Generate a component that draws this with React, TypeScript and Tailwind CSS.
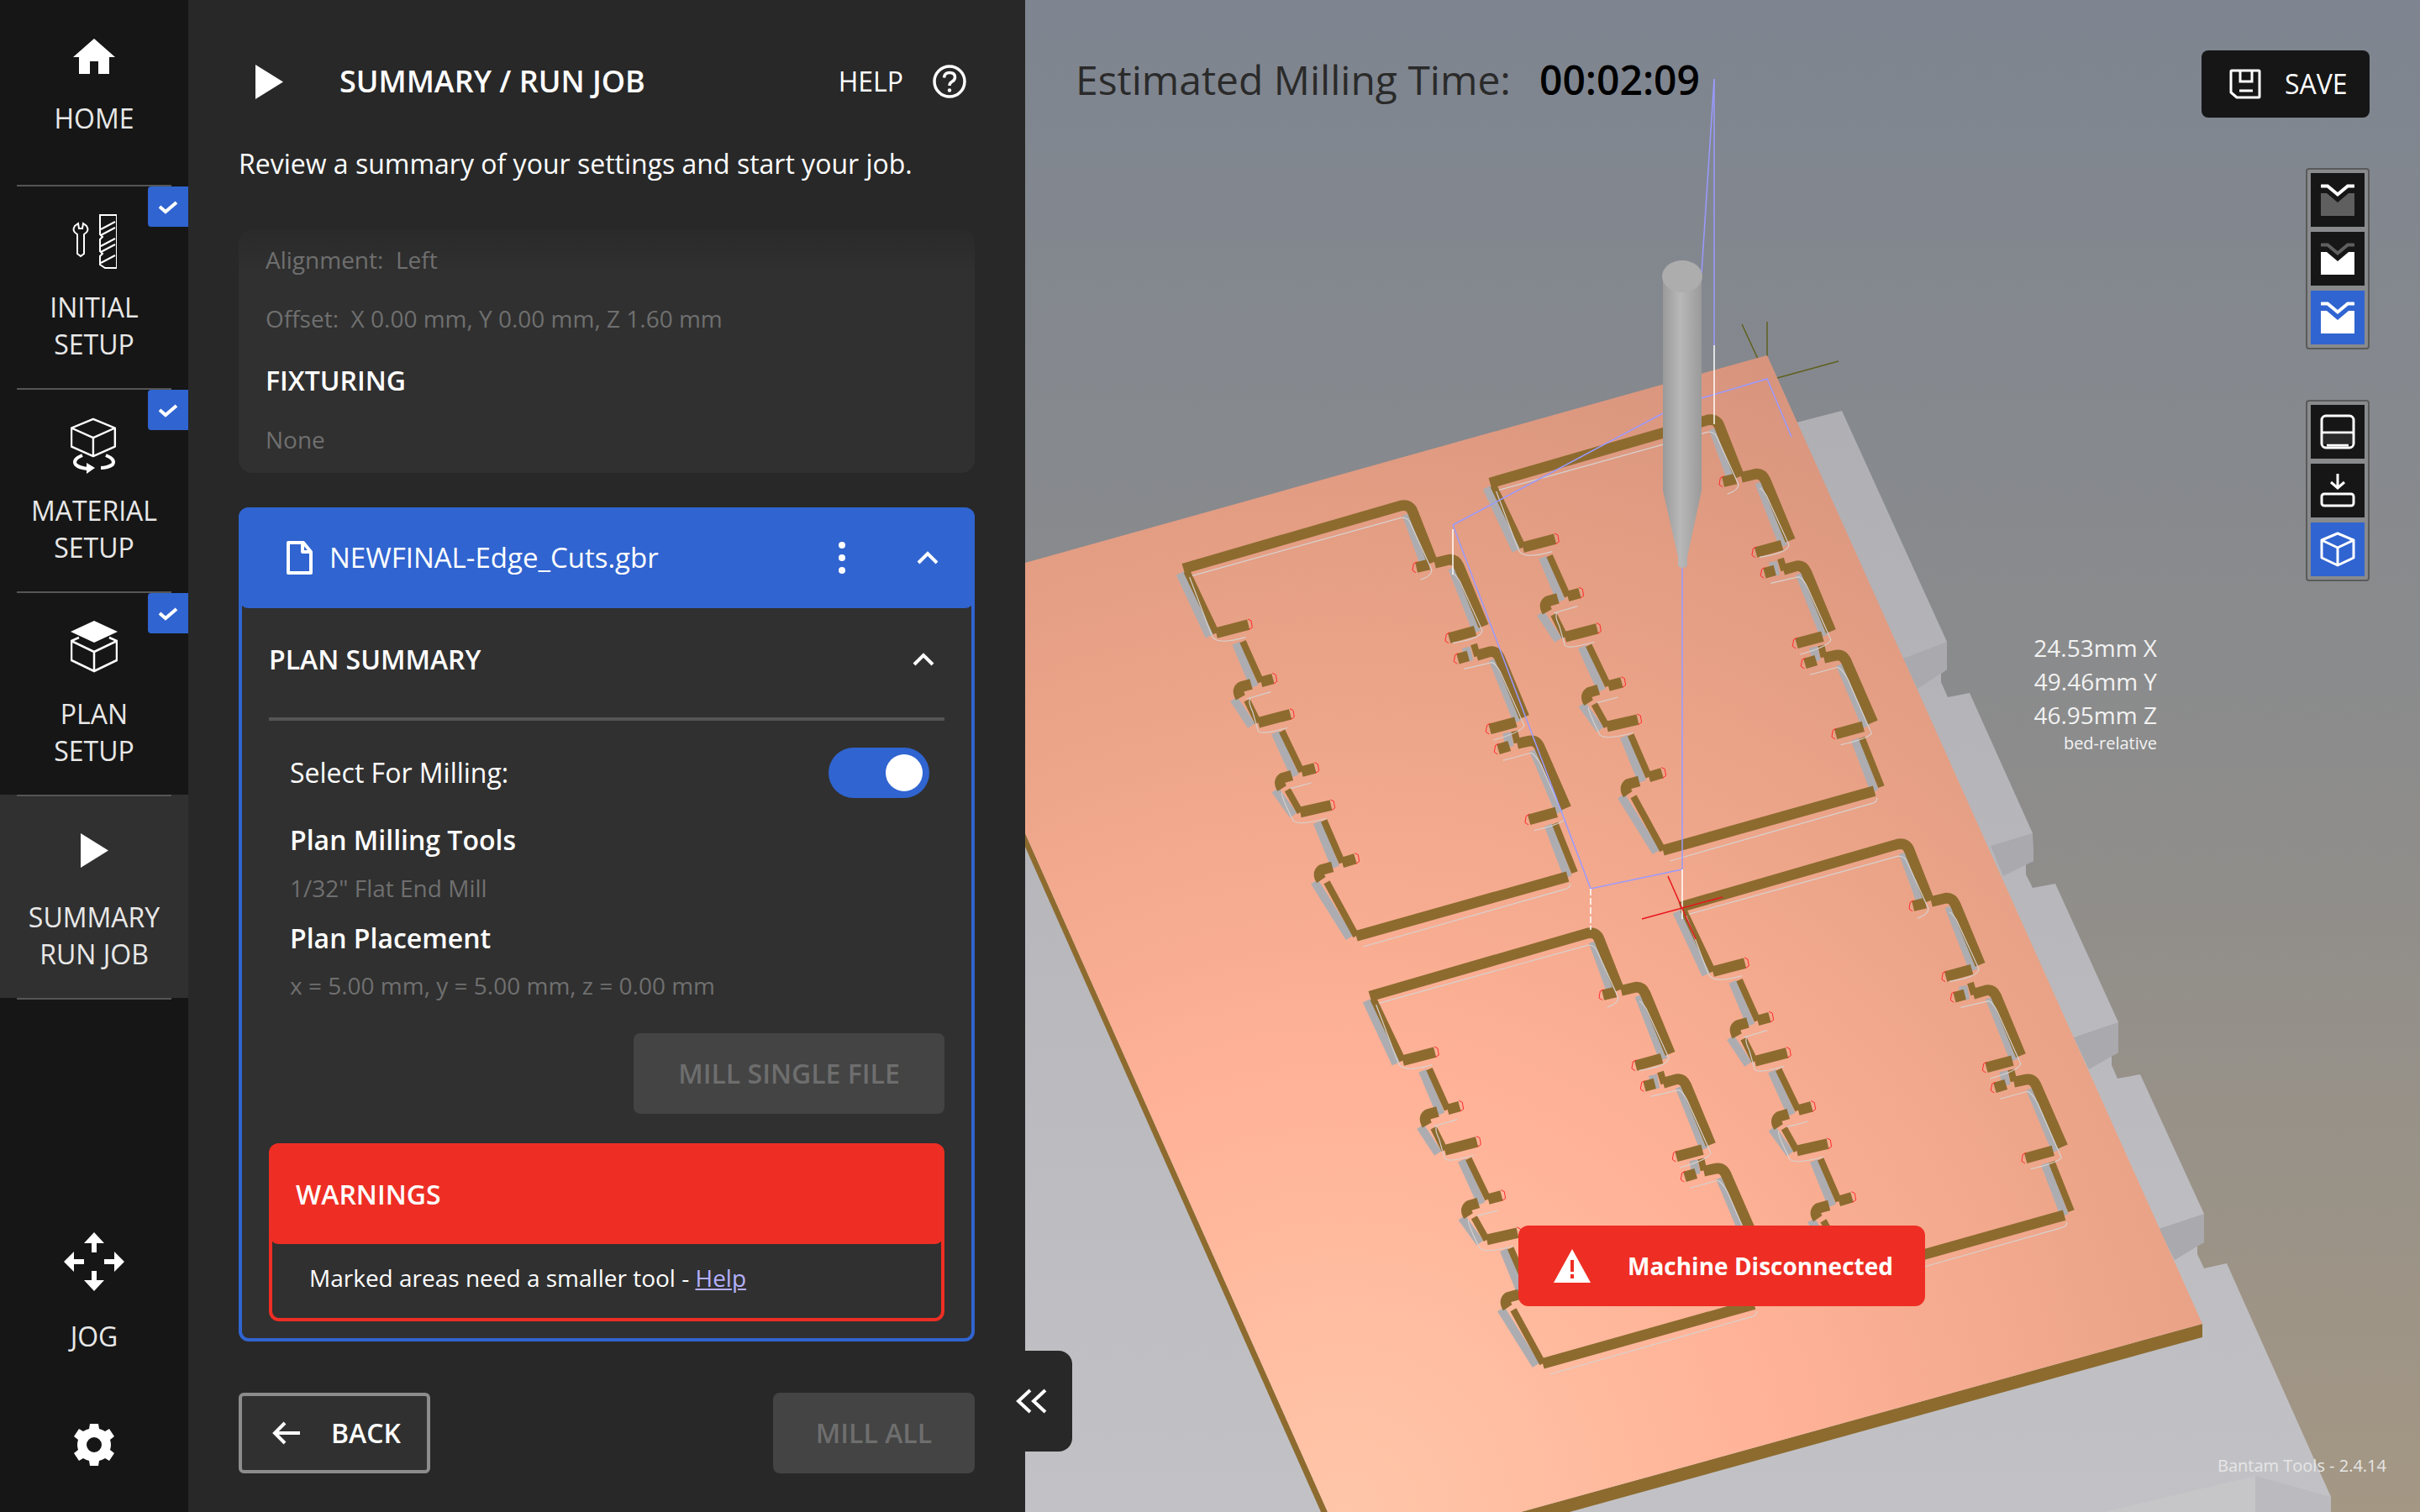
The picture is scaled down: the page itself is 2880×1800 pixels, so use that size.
import type { ReactNode } from 'react';

// walls and cuts of one PCB panel, in units of 1/3 px
const THICK = [
  'M58 300 L835 75 Q868 68 878 100 L948 278',
  'M890 296 L935 285',
  'M955 280 L1005 268 Q1030 265 1042 292 L1130 505',
  'M1007 548 L1100 522',
  'M1038 622 L1075 612',
  'M1105 610 L1150 597 Q1175 592 1187 618 L1275 830',
  'M1152 873 L1245 848',
  'M1182 945 L1222 933',
  'M1250 925 L1295 915 Q1320 912 1332 942 L1425 1155',
  'M1292 1197 L1390 1170',
  'M1430 1400 L675 1612',
  'M175 530 L290 500',
  'M335 705 L378 693',
  'M300 712 L265 722 Q248 735 262 760',
  'M325 850 L440 820',
  'M480 1025 L528 1012',
  'M445 1038 L412 1048 Q395 1062 410 1085',
  'M475 1170 L585 1145',
  'M625 1350 L672 1336',
  'M590 1365 L552 1375 Q535 1390 550 1412',
];

const THIN = [
  'M1095 570 L1108 612',
  'M1240 880 L1250 922',
  'M1385 1210 L1455 1385',
  'M70 310 L175 530',
  'M270 560 L335 705',
  'M285 770 L325 850',
  'M410 880 L480 1025',
  'M430 1090 L475 1170',
  'M560 1200 L625 1350',
  'M570 1420 L675 1612',
];

const WALLS = [
  'M878 100 L945 285',
  'M1042 292 L1130 520',
  'M1092 575 L1102 625',
  'M1187 618 L1275 840',
  'M1237 880 L1247 930',
  'M1332 942 L1425 1165',
  'M1385 1210 L1455 1395',
  'M70 310 L175 535',
  'M270 560 L335 715',
  'M262 760 L325 855',
  'M410 880 L480 1035',
  'M410 1085 L475 1175',
  'M560 1200 L625 1360',
  'M550 1412 L675 1612',
];

const TOOLPATH =
  'M90 325 L835 118 Q860 115 870 140 L945 305 Q945 325 905 340 M1020 318 Q1030 320 1045 345 L1125 520 Q1125 550 1020 565 M1060 658 L1160 635 Q1175 640 1190 670 L1275 860 Q1265 885 1165 912 M1200 985 L1300 958 Q1315 965 1335 1000 L1420 1195 Q1400 1215 1310 1235 M1440 1425 Q1440 1440 1420 1445 L700 1650 M80 330 L160 540 Q175 575 280 545 M285 765 L370 740 M300 760 Q285 770 305 810 L325 880 Q340 895 430 868 M440 1085 L515 1065 M410 1100 Q405 1110 450 1200 Q470 1220 570 1192';

const RED_ENDS = [
  [296, 500, 1], [384, 693, 1], [446, 820, 1], [534, 1012, 1], [591, 1145, 1], [678, 1336, 1],
  [884, 296, -1], [1001, 548, -1], [1032, 622, -1], [1146, 873, -1], [1176, 945, -1], [1286, 1197, -1],
];

function Panel({ dx, dy }: { dx: number; dy: number }) {
  return (
    <g transform={`translate(${1980 + dx} ${980 + dy}) scale(0.3333)`} fill="none">
      {WALLS.map((d) => (
        <path key={d} d={d} transform="translate(-24 6)" stroke="#adadb1" strokeWidth="30" />
      ))}
      {THICK.map((d) => (
        <path key={d} d={d} stroke="#8d6b2f" strokeWidth="38" strokeLinejoin="round" />
      ))}
      {THIN.map((d) => (
        <path key={d} d={d} stroke="#8d6b2f" strokeWidth="24" />
      ))}
      {RED_ENDS.map(([x, y, s]) => (
        <path
          key={`${x}-${y}`}
          d={`M${x - 8 * s} ${y - 20} L${x + 4 * s} ${y - 14} L${x + 8 * s} ${y + 10} L${x - 4 * s} ${y + 18}`}
          stroke="#ff2a2a"
          strokeWidth="3"
        />
      ))}
      <path d={TOOLPATH} stroke="#d6d2d0" strokeWidth="3.5" />
    </g>
  );
}

function Scene() {
  return (
    <svg className="absolute inset-0 h-full w-full" viewBox="1220 0 1660 1800">
      <defs>
        <radialGradient id="copper" gradientUnits="userSpaceOnUse" cx="1600" cy="1800" r="1500">
          <stop offset="0" stopColor="#ffc6a9" />
          <stop offset="0.35" stopColor="#ffb297" />
          <stop offset="0.66" stopColor="#eba488" />
          <stop offset="1" stopColor="#d6937c" />
        </radialGradient>
        <linearGradient id="bed" gradientUnits="userSpaceOnUse" x1="0" y1="500" x2="0" y2="1800">
          <stop offset="0" stopColor="#afafb4" />
          <stop offset="1" stopColor="#c2c2c6" />
        </linearGradient>
        <linearGradient id="shank" x1="0" y1="0" x2="1" y2="0">
          <stop offset="0" stopColor="#9a9a9a" />
          <stop offset="0.45" stopColor="#b8b8b8" />
          <stop offset="1" stopColor="#9a9a9a" />
        </linearGradient>
      </defs>

      {/* bed with its teeth */}
      <polygon
        fill="url(#bed)"
        points="2138,503 2192,489 2317,764 2317,797 2310,802 2310,812 2318,830 2344,825 2419,992 2420,1025 2411,1029 2411,1041 2419,1057 2446,1052 2521,1217 2521,1253 2513,1257 2513,1268 2520,1284 2547,1279 2623,1445 2623,1479 2615,1482 2615,1493 2623,1510 2650,1504 2774,1782 2774,1800 1220,1800 1220,900"
      />
      <polygon fill="#a9a9ae" points="2265,784 2317,764 2317,797 2282,820" />
      <polygon fill="#a9a9ae" points="2369,1007 2419,992 2420,1025 2384,1043" />
      <polygon fill="#a9a9ae" points="2468,1235 2521,1217 2521,1253 2486,1273" />
      <polygon fill="#a9a9ae" points="2569,1463 2623,1445 2623,1479 2588,1500" />
      <polygon fill="#bbbbbf" points="2684,1757 2774,1782 2774,1800 2684,1800" />
      <polygon fill="#c6c6c9" points="2504,1800 2684,1757 2684,1800" />

      {/* axes at the work origin */}
      <g fill="none" stroke="#5f5f1c" strokeWidth="1.5">
        <path d="M2103 383 L2103 451" />
        <path d="M2073 386 L2103 451" />
        <path d="M2115 450 L2188 430" />
      </g>

      {/* copper board */}
      <polygon fill="#8d6b2f" points="2621,1576 2621,1592 1868,1800 1810,1800" />
      <polygon fill="#8d6b2f" points="1220,992 1580,1800 1572,1800 1220,1008" />
      <polygon fill="url(#copper)" points="2103,423 2621,1576 1810,1800 1580,1800 1220,992 1220,670" />

      <Panel dx={-226} dy={-505} />
      <Panel dx={-591} dy={-403} />
      <Panel dx={0} dy={0} />
      <Panel dx={-369} dy={106} />

      {/* tool paths */}
      <g fill="none" stroke="#9a9aff" strokeWidth="1.5">
        <path d="M2040 94 L2025 325" />
        <path d="M2040 94 L2040 411" />
        <path d="M1729 625 L1979 492" />
        <path d="M2025 474 L2103 451 L2132 520" />
        <path d="M1729 625 L1893 1058 L2002 1035" />
        <path d="M2002 676 L2002 1035" />
      </g>
      <g fill="none" stroke="#ffffff" strokeWidth="1.5">
        <path d="M2040 411 L2040 505" />
        <path d="M1729 630 L1729 684" />
        <path d="M1893 1058 L1893 1107" strokeDasharray="8 3" />
        <path d="M2002 1035 L2002 1094" />
      </g>
      <g fill="none" stroke="#e8141c" strokeWidth="1.5">
        <path d="M1985 1043 L2018 1118" />
        <path d="M1954 1094 L2050 1068" />
      </g>

      {/* end mill */}
      <path d="M1979 329 L2025 329 L2025 584 L2008 663 L2008 674 Q2002 678 1997 674 L1997 663 L1979 584 Z" fill="url(#shank)" />
      <ellipse cx="2002" cy="329" rx="24" ry="19" fill="#adadad" />
    </svg>
  );
}

function HomeIcon() {
  return (
    <svg width="50" height="42" viewBox="0 0 50 42" fill="#fff">
      <path d="M25 0 L50 22 L43 22 L43 42 L30 42 L30 27 L20 27 L20 42 L7 42 L7 22 L0 22 Z" />
    </svg>
  );
}

function ToolsIcon() {
  return (
    <svg width="54" height="66" viewBox="0 0 54 66" fill="none" stroke="#fff" strokeWidth="2">
      <path d="M4 14 L8 11 L9 17 L13 17 L14 11 L18 14 Q22 20 15 24 L15 47 L11 50 L7 47 L7 24 Q0 20 4 14 Z" />
      <path d="M34 1 H54 V64 H40 L34 60 V50 L37 47 L34 44 V30 L37 27 L34 24 V9 Z" />
      <path d="M35 18 L52 9 M35 25 L52 16 M35 38 L52 29 M35 45 L52 36 M35 58 L52 49" />
    </svg>
  );
}

function CubeIcon({ stroke = 2.5 }: { stroke?: number }) {
  return (
    <path
      d="M27 1 L54 12 L54 35 L27 47 L0 35 L0 12 Z M0 12 L27 24 L54 12 M27 24 L27 47"
      fill="none"
      stroke="#fff"
      strokeWidth={stroke}
      strokeLinejoin="round"
      transform="translate(1 1) scale(0.96)"
    />
  );
}

function MaterialIcon() {
  return (
    <svg width="56" height="68" viewBox="0 0 56 68" fill="none">
      <CubeIcon />
      <path d="M14 45 Q2 50 6 56 Q10 60 20 61 M42 45 Q54 50 50 56 Q44 60 36 60" stroke="#fff" strokeWidth="4" />
      <path d="M19 54 L29 60 L19 67 Z" fill="#fff" />
    </svg>
  );
}

function PlanIcon() {
  return (
    <svg width="56" height="62" viewBox="0 0 56 62" fill="none">
      <path d="M28 0 L56 13 L28 26 L0 13 Z" fill="#fff" />
      <path d="M10 20 L1 24 L1 47 L28 60 L55 47 L55 24 L46 20 M1 24 L28 37 L55 24 M28 37 L28 60" stroke="#fff" strokeWidth="2.5" />
    </svg>
  );
}

function PlayIcon({ className }: { className: string }) {
  return (
    <svg className={className} viewBox="0 0 33 41" fill="#fff">
      <path d="M0 0 L33 20.5 L0 41 Z" />
    </svg>
  );
}

function JogIcon() {
  return (
    <svg width="72" height="70" viewBox="0 0 72 70" fill="#fff">
      <path d="M36 0 L48 13 L39 13 L39 24 L33 24 L33 13 L24 13 Z" />
      <path d="M36 70 L48 57 L39 57 L39 46 L33 46 L33 57 L24 57 Z" />
      <path d="M0 35 L12 23 L12 32 L24 32 L24 38 L12 38 L12 47 Z" />
      <path d="M72 35 L60 23 L60 32 L48 32 L48 38 L60 38 L60 47 Z" />
    </svg>
  );
}

function GearIcon() {
  return (
    <svg width="50" height="50" viewBox="0 0 50 50">
      <path
        fill="#fff"
        fillRule="evenodd"
        d="M20 0 H30 L31 6 Q35 7 38 9 L43 6 L49 15 L44 19 Q45 22 45 25 Q45 28 44 31 L49 35 L43 44 L38 41 Q35 43 31 44 L30 50 H20 L19 44 Q15 43 12 41 L7 44 L1 35 L6 31 Q5 28 5 25 Q5 22 6 19 L1 15 L7 6 L12 9 Q15 7 19 6 Z M25 16 A9 9 0 1 0 25 34 A9 9 0 1 0 25 16 Z"
      />
    </svg>
  );
}

function NavItem({ icon, lines, done, active }: { icon: ReactNode; lines: string[]; done?: boolean; active?: boolean }) {
  return (
    <div className={`relative flex h-[242px] flex-col items-center ${active ? 'bg-[#303030]' : ''}`}>
      <div className="absolute left-[20px] right-[20px] top-0 h-[2px] bg-[#555555]" />
      {done && (
        <div className="absolute right-0 top-[2px] flex h-[48px] w-[48px] items-center justify-center rounded-l-[4px] bg-[#3064d0]">
          <svg width="24" height="18" viewBox="0 0 24 18" fill="none" stroke="#fff" strokeWidth="4">
            <path d="M2 9 L9 15 L22 4" />
          </svg>
        </div>
      )}
      <div className="mt-[35px] flex h-[70px] items-start justify-center">{icon}</div>
      <div className="mt-[19px] text-center text-[32px] leading-[44px] text-[#e8e8e8]">
        {lines.map((l) => (
          <div key={l}>{l}</div>
        ))}
      </div>
    </div>
  );
}

function Sidebar() {
  return (
    <aside className="flex h-full w-[224px] shrink-0 flex-col bg-[#161616]">
      <div className="flex h-[220px] flex-col items-center pt-[46px]">
        <HomeIcon />
        <div className="mt-[31px] text-[32px] leading-[44px] text-[#e8e8e8]">HOME</div>
      </div>
      <NavItem icon={<ToolsIcon />} lines={['INITIAL', 'SETUP']} done />
      <NavItem icon={<MaterialIcon />} lines={['MATERIAL', 'SETUP']} done />
      <NavItem icon={<PlanIcon />} lines={['PLAN', 'SETUP']} done />
      <NavItem icon={<PlayIcon className="mt-[11px] h-[41px] w-[33px]" />} lines={['SUMMARY', 'RUN JOB']} active />
      <div className="mx-[20px] h-[2px] bg-[#555555]" />
      <div className="mt-auto flex flex-col items-center pb-[55px]">
        <JogIcon />
        <div className="mt-[32px] text-[32px] leading-[44px] text-[#e8e8e8]">JOG</div>
        <div className="mt-[82px]">
          <GearIcon />
        </div>
      </div>
    </aside>
  );
}

function ChevronUp() {
  return (
    <svg width="26" height="16" viewBox="0 0 26 16" fill="none" stroke="#fff" strokeWidth="4">
      <path d="M2 14 L13 3 L24 14" />
    </svg>
  );
}

function SummaryPanel() {
  return (
    <section className="relative flex h-full w-[996px] shrink-0 flex-col bg-[#282828] px-[60px] text-white">
      <header className="mt-[57px] flex h-[80px] items-center">
        <div className="w-[120px] pl-[20px]">
          <PlayIcon className="h-[41px] w-[33px]" />
        </div>
        <h1 className="text-[36px] font-semibold leading-[44px]">SUMMARY / RUN JOB</h1>
        <div className="ml-auto mr-[10px] flex items-center gap-[35px]">
          <span className="text-[32px]">HELP</span>
          <svg width="40" height="40" viewBox="0 0 40 40" fill="none" stroke="#fff">
            <circle cx="20" cy="20" r="18" strokeWidth="3.5" />
            <path d="M13.5 15.5 Q14 9.5 20 9.5 Q26.5 9.5 26.5 15 Q26.5 18.5 22.5 20.5 Q20 22 20 25" strokeWidth="3.5" />
            <circle cx="20" cy="30.5" r="2.2" fill="#fff" stroke="none" />
          </svg>
        </div>
      </header>

      <p className="mt-[36px] text-[32px] leading-[44px]">Review a summary of your settings and start your job.</p>

      <div className="mt-[56px] h-[290px] rounded-[16px] bg-linear-to-b from-[#2a2a2a] to-[#303030] to-[18%] pl-[32px] pt-[14px] text-[28px] leading-[44px] text-[#6f6f6f]">
        <div>Alignment:&nbsp; Left</div>
        <div className="mt-[26px]">Offset:&nbsp; X 0.00 mm, Y 0.00 mm, Z 1.60 mm</div>
        <div className="mt-[30px] text-[32px] font-semibold text-white">FIXTURING</div>
        <div className="mt-[26px]">None</div>
      </div>

      <div className="mt-[41px] flex h-[993px] flex-col rounded-[12px] border-x-[4px] border-b-[4px] border-[#3064d0] bg-[#303030]">
        <div className="-mx-[4px] flex h-[120px] shrink-0 items-center rounded-[12px] bg-[#3064d0] pl-[56px]">
          <svg width="32" height="40" viewBox="0 0 32 40" fill="none" stroke="#fff" strokeWidth="4">
            <path d="M3 2 H21 L30 13 V38 H3 Z M20 2 V13 H30" strokeLinejoin="round" />
          </svg>
          <span className="ml-[20px] text-[33px] font-medium leading-[44px]">NEWFINAL-Edge_Cuts.gbr</span>
          <div className="ml-auto mr-[85px] flex flex-col gap-[7px]">
            <i className="h-[8px] w-[8px] rounded-full bg-white" />
            <i className="h-[8px] w-[8px] rounded-full bg-white" />
            <i className="h-[8px] w-[8px] rounded-full bg-white" />
          </div>
          <div className="mr-[43px]">
            <ChevronUp />
          </div>
        </div>

        <div className="flex flex-1 flex-col px-[32px]">
          <div className="flex h-[122px] shrink-0 items-center justify-between pr-[12px]">
            <span className="text-[32px] font-semibold leading-[44px]">PLAN SUMMARY</span>
            <ChevronUp />
          </div>
          <div className="mt-[8px] h-[4px] shrink-0 bg-[#555555]" />

          <div className="mt-[32px] flex h-[60px] shrink-0 items-center justify-between pl-[25px] pr-[18px]">
            <span className="text-[32px]">Select For Milling:</span>
            <div className="flex h-[60px] w-[120px] items-center justify-end rounded-full bg-[#3064d0] pr-[8px]">
              <div className="h-[44px] w-[44px] rounded-full bg-white" />
            </div>
          </div>

          <div className="mt-[28px] pl-[25px] text-[32px] font-semibold leading-[44px]">Plan Milling Tools</div>
          <div className="mt-[13px] pl-[25px] text-[28px] leading-[44px] text-[#6f6f6f]">1/32" Flat End Mill</div>
          <div className="mt-[16px] pl-[25px] text-[32px] font-semibold leading-[44px]">Plan Placement</div>
          <div className="mt-[12px] pl-[25px] text-[28px] leading-[44px] text-[#6f6f6f]">x = 5.00 mm, y = 5.00 mm, z = 0.00 mm</div>

          <div className="mt-[35px] flex h-[96px] w-[370px] shrink-0 items-center justify-center self-end rounded-[8px] bg-[#444444] text-[32px] font-semibold text-[#6e6e6e]">
            MILL SINGLE FILE
          </div>

          <div className="mt-[35px] h-[212px] shrink-0 rounded-[12px] border-x-[4px] border-b-[4px] border-[#ee2e24]">
            <div className="-mx-[4px] flex h-[120px] items-center rounded-[12px] bg-[#ee2e24] pl-[32px] pt-[2px] text-[32px] font-semibold">
              WARNINGS
            </div>
            <div className="pl-[44px] pt-[18px] text-[28px] leading-[44px]">
              Marked areas need a smaller tool - <span className="text-[#b4b0ff] underline">Help</span>
            </div>
          </div>
        </div>
      </div>

      <div className="mt-[61px] flex h-[96px] justify-between">
        <div className="flex w-[228px] items-center rounded-[6px] border-[4px] border-[#8c8c8c] bg-[#303030] pl-[36px]">
          <svg width="34" height="28" viewBox="0 0 34 28" fill="none" stroke="#fff" strokeWidth="4">
            <path d="M33 14 H4 M15 2 L3 14 L15 26" />
          </svg>
          <span className="ml-[36px] text-[32px] font-semibold">BACK</span>
        </div>
        <div className="flex w-[240px] items-center justify-center rounded-[8px] bg-[#444444] text-[32px] font-semibold text-[#6e6e6e]">
          MILL ALL
        </div>
      </div>

      <div className="absolute bottom-[72px] left-full z-10 h-[120px] w-[56px] rounded-r-[16px] bg-[#282828]">
        <svg className="absolute left-[-12px] top-[45px]" width="40" height="30" viewBox="0 0 40 30" fill="none" stroke="#fff" strokeWidth="4">
          <path d="M18 2 L4 15 L18 28 M36 2 L22 15 L36 28" />
        </svg>
      </div>
    </section>
  );
}

function ToolButton({ active, children }: { active?: boolean; children: ReactNode }) {
  return (
    <div className={`flex h-[64px] w-[64px] items-center justify-center ${active ? 'bg-[#3064d0]' : 'bg-[#161616]'}`}>
      {children}
    </div>
  );
}

function LayerIcon({ top, bottom }: { top: string; bottom: string }) {
  return (
    <svg width="40" height="40" viewBox="0 0 40 40" fill="none">
      <path d="M1 3.5 H8 L20 13.5 L32 3.5 H39" stroke={top} strokeWidth="4" strokeLinecap="round" />
      <path d="M0 12 H7 L20 23 L33 12 H40 V39 H0 Z" fill={bottom} />
    </svg>
  );
}

function ToolGroup({ children }: { children: ReactNode }) {
  return (
    <div className="flex w-[76px] flex-col gap-[6px] rounded-[4px] border-[2px] border-[#5a5a5a] bg-[#888a8c] p-[4px]">
      {children}
    </div>
  );
}

function Viewport() {
  return (
    <main className="relative h-full flex-1 overflow-hidden bg-linear-to-b from-[#7e8590] via-[#8c8c8c] to-[#a49784]">
      <Scene />

      <div className="absolute left-[60px] top-[63px] flex items-center text-[48px] leading-[64px] text-[#2a2a2a]">
        Estimated Milling Time:
        <span className="ml-[34px] font-semibold text-black">00:02:09</span>
      </div>

      <div className="absolute right-[60px] top-[60px] flex h-[80px] w-[200px] items-center rounded-[8px] bg-[#161616] pl-[33px] text-white">
        <svg width="38" height="36" viewBox="0 0 38 36" fill="none" stroke="#fff" strokeWidth="3">
          <path d="M3 2 H35 Q36 2 36 3 V33 Q36 34 35 34 H9 L2 28 V3 Q2 2 3 2 Z" strokeLinejoin="round" />
          <path d="M13 2 V15 H27 V2 M12 26 H28" />
        </svg>
        <span className="ml-[28px] text-[32px] font-medium">SAVE</span>
      </div>

      <div className="absolute right-[60px] top-[200px]">
        <ToolGroup>
          <ToolButton>
            <LayerIcon top="#ffffff" bottom="#5f5f5f" />
          </ToolButton>
          <ToolButton>
            <LayerIcon top="#5f5f5f" bottom="#ffffff" />
          </ToolButton>
          <ToolButton active>
            <LayerIcon top="#ffffff" bottom="#ffffff" />
          </ToolButton>
        </ToolGroup>
      </div>

      <div className="absolute right-[60px] top-[476px]">
        <ToolGroup>
          <ToolButton>
            <svg width="42" height="42" viewBox="0 0 42 42" fill="none" stroke="#fff" strokeWidth="3">
              <rect x="2" y="2" width="38" height="38" rx="5" />
              <path d="M2 22 H40 M8 37 H34" />
              <rect x="4" y="23.5" width="34" height="12" fill="#2a2a2a" stroke="none" />
            </svg>
          </ToolButton>
          <ToolButton>
            <svg width="42" height="42" viewBox="0 0 42 42" fill="none" stroke="#fff" strokeWidth="3">
              <path d="M21 1 V18 M13 11 L21 18 L29 11" />
              <rect x="2" y="25" width="38" height="14" rx="3" />
            </svg>
          </ToolButton>
          <ToolButton active>
            <svg width="42" height="42" viewBox="0 0 42 42" fill="none" stroke="#fff" strokeWidth="3" strokeLinejoin="round">
              <path d="M21 2 L40 10 L40 31 L21 40 L2 31 L2 10 Z M2 10 L21 19 L40 10 M21 19 V40" />
            </svg>
          </ToolButton>
        </ToolGroup>
      </div>

      <div className="absolute right-[313px] top-[751px] text-right text-[#f2f2f2]">
        <div className="text-[28px] leading-[40px]">24.53mm X</div>
        <div className="text-[28px] leading-[40px]">49.46mm Y</div>
        <div className="text-[28px] leading-[40px]">46.95mm Z</div>
        <div className="text-[20px] leading-[28px]">bed-relative</div>
      </div>

      <div className="absolute right-[40px] top-[1732px] text-[20px] leading-[26px] text-[#e6e6e6]">Bantam Tools - 2.4.14</div>

      <div className="absolute left-[587px] top-[1459px] flex h-[96px] w-[484px] items-center rounded-[12px] bg-[#ee2e24] pl-[42px] text-white">
        <svg width="44" height="40" viewBox="0 0 44 40">
          <path fillRule="evenodd" fill="#fff" d="M22 0 L44 40 H0 Z M20 13 V27 H24 V13 Z M20 30 V35 H24 V30 Z" />
        </svg>
        <span className="ml-[44px] text-[28px] font-bold">Machine Disconnected</span>
      </div>
    </main>
  );
}

export default function App() {
  return (
    <div className="flex h-[1800px] w-[2880px] overflow-hidden font-['Open_Sans',sans-serif]">
      <Sidebar />
      <SummaryPanel />
      <Viewport />
    </div>
  );
}
